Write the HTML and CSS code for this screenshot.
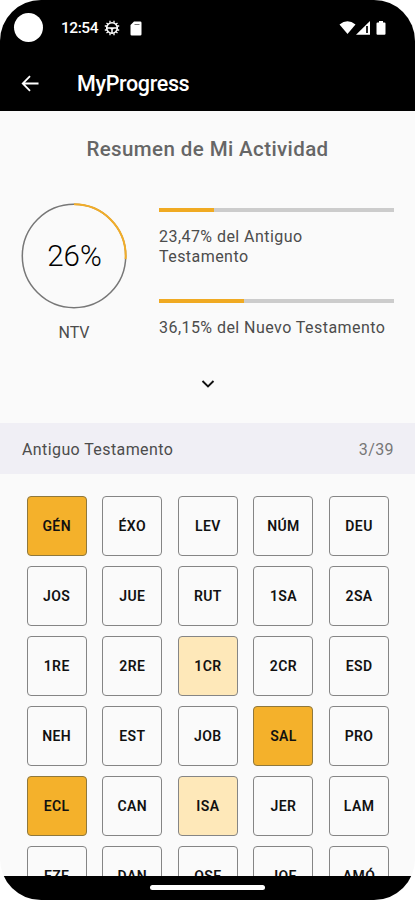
FILE: index.html
```html
<!DOCTYPE html>
<html lang="es">
<head>
<meta charset="utf-8">
<title>MyProgress</title>
<link rel="stylesheet" href="styles.css">
</head>
<body>
<div class="phone">
  <header class="top">
    <div class="status">
      <span class="camera"></span>
      <span class="clock">12:54</span>
      <svg class="wheel" viewBox="0 0 16 16" fill="none" stroke="#fff"><circle cx="8" cy="8" r="5.3" stroke-width="1.6"/><path d="M6 .8v2M10 .8v2M6 13.200v2M10 13.200v2M.8 6h2M.8 10h2M13.200 6h2M13.200 10h2M2.500 3l1.500 1.200M13.500 3 12 4.200M2.500 13 4 11.800M13.500 13 12 11.800" stroke-width="1.300"/><path d="M2.700 8h10.600M8 8v5.300M6.500 8 8 9.500 9.500 8" stroke-width="1.500"/></svg>
      <svg class="card" viewBox="0 0 12 15"><path d="M4 .5h6.2a1.3 1.3 0 0 1 1.3 1.3v11.4a1.3 1.3 0 0 1-1.3 1.3H1.8A1.3 1.3 0 0 1 .5 13.200V4z" fill="#fff"/><path d="M4.500 3.500h5" stroke="#777"/></svg>
      <svg class="signals" viewBox="0 0 48 16"><path d="M.5 4.500Q8.500-2 16.500 4.500L8.500 14z" fill="#fff"/><path d="M17 14.800 31 1v13.800z" fill="#fff"/><path d="M28 6v7" stroke="#000" stroke-width="1.700"/><path d="M40 1h4v1.500h1.500q1 0 1 1v10.300q0 1-1 1h-7q-1 0-1-1V3.500q0-1 1-1H40z" fill="#fff"/></svg>
    </div>
    <div class="appbar">
      <svg class="back" viewBox="0 0 20 18" fill="none" stroke="#fff" stroke-width="1.900"><path d="M18.500 9H2M9.500 1.300 1.800 9l7.700 7.700"/></svg>
      <h1 class="title">MyProgress</h1>
    </div>
  </header>
  <main class="content">
    <h2 class="heading">Resumen de Mi Actividad</h2>
    <section class="summary">
      <div class="total">
        <svg class="ring" viewBox="0 0 106 106" fill="none"><circle cx="53" cy="53" r="51.700" stroke="#777" stroke-width="1.500"/><circle cx="53" cy="53" r="51.700" stroke="#f2ad28" stroke-width="2" pathLength="100" stroke-dasharray="26 74" transform="rotate(-90 53 53)"/></svg>
        <span class="percent">26%</span>
        <span class="version">NTV</span>
      </div>
      <div class="bars">
        <div class="bar"><div class="fill" style="width:23.47%"></div></div>
        <p class="label">23,47% del Antiguo<br>Testamento</p>
        <div class="bar second"><div class="fill" style="width:36.15%"></div></div>
        <p class="label">36,15% del Nuevo Testamento</p>
      </div>
    </section>
    <svg class="chevron" viewBox="0 0 14 8" fill="none" stroke="#111" stroke-width="1.900"><path d="m1.500 1 5.500 5.500L12.500 1"/></svg>
    <div class="section"><span>Antiguo Testamento</span><span class="count">3/39</span></div>
    <div class="books">
      <div class="book done">GÉN</div><div class="book">ÉXO</div><div class="book">LEV</div><div class="book">NÚM</div><div class="book">DEU</div>
      <div class="book">JOS</div><div class="book">JUE</div><div class="book">RUT</div><div class="book">1SA</div><div class="book">2SA</div>
      <div class="book">1RE</div><div class="book">2RE</div><div class="book started">1CR</div><div class="book">2CR</div><div class="book">ESD</div>
      <div class="book">NEH</div><div class="book">EST</div><div class="book">JOB</div><div class="book done">SAL</div><div class="book">PRO</div>
      <div class="book done">ECL</div><div class="book">CAN</div><div class="book started">ISA</div><div class="book">JER</div><div class="book">LAM</div>
      <div class="book">EZE</div><div class="book">DAN</div><div class="book">OSE</div><div class="book">JOE</div><div class="book">AMÓ</div>
    </div>
  </main>
  <footer class="nav"><span class="handle"></span></footer>
</div>
</body>
</html>
```
FILE: styles.css
```css
* { box-sizing: border-box; }
body { margin: 0; background: #fff; font-family: Roboto, "Liberation Sans", sans-serif; }
.phone { width: 415px; height: 900px; overflow: hidden; display: flex; flex-direction: column; border-radius: 41px; background: #fafafa; }
.top { height: 111px; flex: none; background: #000; color: #fff; }
.status { height: 56px; display: flex; align-items: center; padding: 0 28px 0 14px; }
.camera { width: 29px; height: 29px; border-radius: 50%; background: #fff; margin-top: -1px; }
.clock { margin-left: 18px; width: 37px; font-size: 15.5px; font-weight: 500; letter-spacing: -0.45px; }
.wheel { width: 16px; height: 16px; margin-left: 6px; }
.card { width: 12px; height: 15px; margin-left: 10px; }
.signals { width: 48px; height: 16px; margin-left: auto; }
.appbar { height: 55px; display: flex; align-items: center; padding-left: 21px; }
.back { width: 19px; height: 17px; margin-top: -1px; }
.title { margin: 0 0 0 37px; font-size: 21.5px; line-height: 26px; font-weight: 500; letter-spacing: -0.35px; }
.content { flex: 1; min-height: 0; overflow: hidden; display: flex; flex-direction: column; }
.heading { margin: 25px 0 0; text-align: center; font-size: 20.5px; line-height: 26px; font-weight: 500; color: #666; letter-spacing: 0.4px; }
.summary { display: flex; padding: 41px 21px 0; height: 215px; flex: none; }
.total { display: grid; grid-template: 106px 47px / 106px; place-items: center; flex: none; }
.ring, .percent { grid-area: 1 / 1; }
.ring { width: 106px; height: 106px; }
.percent { font-size: 29.5px; font-weight: 300; color: #000; padding-left: 1px; }
.version { font-size: 16px; color: #4c4c4c; }
.bars { flex: 1; margin-left: 32px; padding-top: 5px; }
.bar { height: 4px; background: #ccc; }
.bar.second { margin-top: 32px; }
.fill { height: 4px; background: #f0aa22; }
.label { margin: 15px 0 0; font-size: 16px; line-height: 20px; color: #4c4c4c; letter-spacing: 0.45px; white-space: nowrap; }
.chevron { width: 14px; height: 8px; margin: 3px auto 35px; flex: none; }
.section { height: 51px; flex: none; background: #f0eff5; display: flex; align-items: center; justify-content: space-between; padding: 2px 21px 0 22px; font-size: 16px; color: #4c4c4c; letter-spacing: 0.4px; }
.count { color: #777; }
.books { flex: none; display: grid; grid-template-columns: repeat(5, 60px); grid-auto-rows: 60px; gap: 10px 15.6px; padding: 22px 0 0 26.700px; }
.book { border: 1px solid #858585; border-radius: 4px; display: flex; align-items: center; justify-content: center; font-size: 14px; font-weight: 600; color: #111; letter-spacing: 0.4px; }
.done { background: #f4b12b; border-color: #8f783d; }
.started { background: #fee8b9; }
.nav { height: 24.5px; flex: none; background: #000; display: flex; justify-content: center; padding-top: 9px; }
.handle { width: 115px; height: 5px; border-radius: 3px; background: #fff; }
```
